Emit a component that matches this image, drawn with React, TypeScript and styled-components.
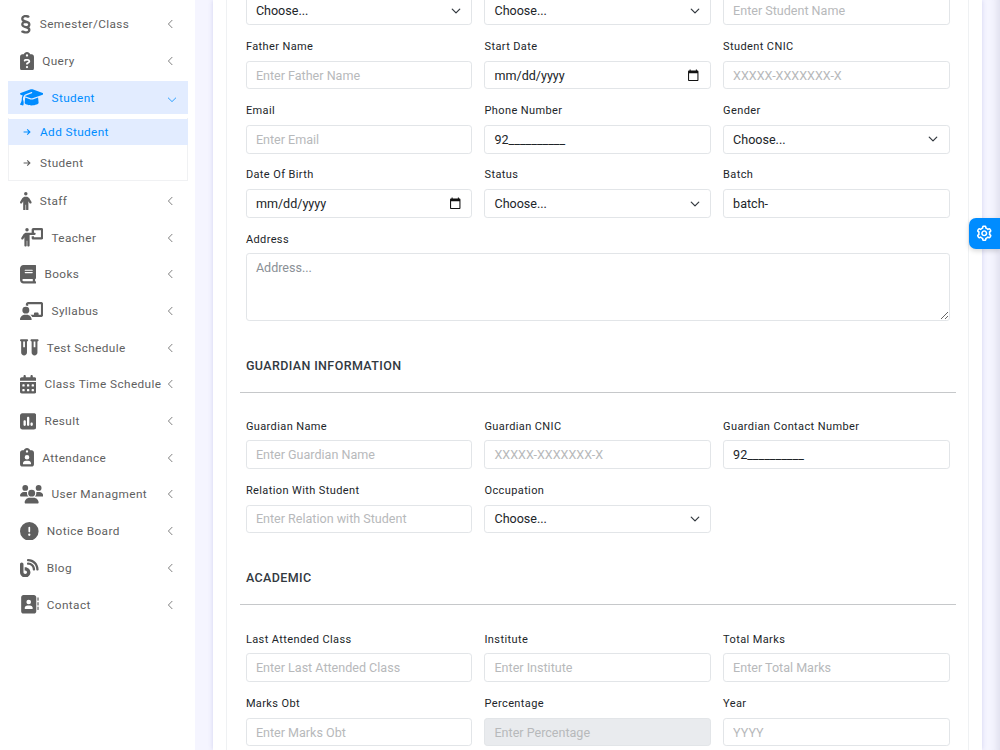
import React from "react";
import styled, { createGlobalStyle, css } from "styled-components";
import type { IconType } from "react-icons";
import {
  FaSection, FaClipboardQuestion, FaGraduationCap, FaPerson, FaPersonChalkboard, FaBook,
  FaChalkboardUser, FaVials, FaCalendarDays, FaSquarePollVertical, FaClipboardUser, FaUsers,
  FaCircleExclamation, FaBlog, FaAddressBook,
} from "react-icons/fa6";
import { BiCog } from "react-icons/bi";

const GlobalStyle = createGlobalStyle`
  *, *::before, *::after { box-sizing: border-box; }
  body {
    margin: 0;
    background: #f5f5ff;
    font-family: Roboto, "Liberation Sans", sans-serif;
    color: #212529;
    overflow: hidden;
  }
  input, select, textarea { font-family: inherit; }
`;

const Page = styled.div`
  display: flex;
  height: 750px;
  overflow: hidden;
`;

const Sidebar = styled.nav`
  flex: 0 0 195.3px;
  min-width: 0;
  padding: 7.6px 7.6px 0 8px;
  background: #fff;
  box-shadow: 0 0 5px rgba(80, 80, 180, 0.16);
`;

const NavLink = styled.a<{ $active?: boolean }>`
  display: flex;
  align-items: center;
  height: 33.3px;
  margin-bottom: 3.42px;
  padding: 0 ${(p) => (p.$active ? "11px" : "13px")} 0 12px;
  font-size: 11.8px;
  letter-spacing: 0.39px;
  color: ${(p) => (p.$active ? "#008cff" : "#5f5f5f")};
  background: ${(p) => (p.$active ? "#e2ecff" : "transparent")};
`;

const IconSlot = styled.span<{ $width: number }>`
  display: flex;
  justify-content: center;
  flex: 0 0 ${(p) => p.$width}px;
  margin-right: 8.2px;

  svg {
    display: block;
    width: ${(p) => p.$width}px;
    height: 18.6px;
  }
`;

const NavText = styled.span`
  flex: 1;
  min-width: 0;
  white-space: nowrap;
`;

const Arrow = styled.svg`
  flex: none;
  width: 10px;
  height: 10px;
  fill: none;
  stroke: currentColor;
  stroke-width: 0.8;
`;

const SubMenu = styled.div`
  margin: 0 0 3.4px;
  padding: 1px 0 3.8px;
  border: 1px solid #f0f1f3;
  border-top: 0;
`;

const SubLink = styled.a<{ $active?: boolean }>`
  display: flex;
  align-items: center;
  gap: 8.5px;
  height: 26.3px;
  margin: 0 -1px 4.7px;
  padding-left: 13.5px;
  font-size: 11.8px;
  letter-spacing: 0.39px;
  color: ${(p) => (p.$active ? "#008cff" : "#5f5f5f")};
  background: ${(p) => (p.$active ? "#e2ecff" : "transparent")};

  &:last-child { margin-bottom: 0; }

  svg {
    width: 10px;
    height: 10px;
    fill: none;
    stroke: currentColor;
    stroke-width: 1.1;
  }
`;

const Main = styled.main`
  flex: 1;
  min-width: 0;
  padding: 0 18.5px 0 18.2px;
  background: #f5f5ff;
  box-shadow: inset -10px 0 8px -8px rgba(60, 60, 90, 0.14);
`;

const Card = styled.div`
  height: 750px;
  padding: 0 12.8px;
  background: #fff;
  box-shadow: 0 0 5px rgba(80, 80, 180, 0.2);
`;

const FormPanel = styled.form`
  display: flow-root;
  height: 750px;
  padding: 0 12px 0 12.6px;
  border: solid #eff1f3;
  border-width: 0 1px;
`;

const Grid = styled.div<{ $scrolled?: boolean }>`
  display: grid;
  grid-template-columns: repeat(3, 1fr);
  column-gap: 12px;
  padding: 0 6px;
  margin-top: ${(p) => (p.$scrolled ? "-3.6px" : "0")};
`;

const Field = styled.label<{ $wide?: boolean }>`
  display: block;
  min-width: 0;
  margin-bottom: 11.75px;
  grid-column: ${(p) => (p.$wide ? "1 / -1" : "auto")};
`;

const Caption = styled.span`
  display: block;
  height: 18px;
  margin-bottom: 5.7px;
  font-size: 11px;
  line-height: 20.2px;
  letter-spacing: 0.39px;
  color: #212529;
`;

const controlText = css`
  font-size: 12.55px;
  line-height: 19px;
  color: #212529;

  &::placeholder {
    color: #b7b9bb;
    opacity: 1;
  }
`;

const Control = styled.span<{ $disabled?: boolean }>`
  display: flex;
  align-items: center;
  height: 28.8px;
  padding: 0 10.4px 0 9px;
  border: 1px solid #e2e5e8;
  border-radius: 3.2px;
  background: ${(p) => (p.$disabled ? "#e9ebee" : "#fff")};
`;

const TextInput = styled.input`
  ${controlText}
  flex: 1;
  min-width: 0;
  height: 100%;
  padding: 0;
  border: 0;
  outline: 0;
  background: transparent;
`;

const SelectInput = styled.select`
  ${controlText}
  flex: 1;
  min-width: 0;
  padding: 0;
  border: 0;
  outline: 0;
  appearance: none;
  background: transparent;
`;

const AddressBox = styled.textarea`
  ${controlText}
  display: block;
  width: 100%;
  height: 67.6px;
  padding: 4px 9px;
  border: 1px solid #e2e5e8;
  border-radius: 3.2px;
  resize: vertical;
  outline: 0;

  &::placeholder { color: #8a9096; }
`;

const SectionHead = styled.div<{ $height: number }>`
  height: ${(p) => p.$height}px;
  padding: 23px 6px 0;
`;

const SectionTitle = styled.h6`
  margin: 0;
  font-size: 12.5px;
  font-weight: 500;
  line-height: 20px;
  letter-spacing: 0.39px;
  text-transform: uppercase;
  color: #32393f;
`;

const Rule = styled.hr`
  height: 1px;
  margin: 16.2px -6px 0;
  border: 0;
  background: #c6c8ca;
`;

const SettingsButton = styled.button`
  position: fixed;
  top: 217.5px;
  right: 0;
  display: flex;
  align-items: center;
  width: 31.5px;
  height: 31.5px;
  padding: 0 0 0 6.5px;
  border: 0;
  border-radius: 7px 0 0 7px;
  background: #008cff;
  color: #fff;
  box-shadow: 0 2px 5px rgba(0, 0, 0, 0.16);
`;

const ChevronLeft = () => (
  <Arrow viewBox="0 0 10 10"><path d="M7.300 1 3.400 5l3.900 4" /></Arrow>
);
const ChevronDown = () => (
  <Arrow viewBox="0 0 10 10"><path d="m1 4.700 4 3.900 4-3.900" /></Arrow>
);
const ArrowRight = () => (
  <svg viewBox="0 0 10 10"><path d="M1.600 5h6.200M5.200 2.300 7.900 5 5.200 7.700" /></svg>
);
const Caret = () => (
  <svg width="10" height="10" viewBox="0 0 16 16" fill="none" stroke="#343a40" strokeWidth="2" strokeLinecap="round" strokeLinejoin="round">
    <path d="m2 5 6 6 6-6" />
  </svg>
);
const Calendar = () => (
  <svg width="12.500" height="12.500" viewBox="0 0 24 24" fill="#111">
    <path d="M20 3h-1V1h-2v2H7V1H5v2H4c-1.100 0-2 .9-2 2v16c0 1.100.9 2 2 2h16c1.100 0 2-.9 2-2V5c0-1.100-.9-2-2-2zm0 18H4V8h16v13z" />
  </svg>
);

type NavEntry = { label: string; icon: IconType; width: number; children?: string[] };

const NAV: NavEntry[] = [
  { label: "Semester/Class", icon: FaSection, width: 11.6 },
  { label: "Query", icon: FaClipboardQuestion, width: 14 },
  { label: "Student", icon: FaGraduationCap, width: 23.3, children: ["Add Student", "Student"] },
  { label: "Staff", icon: FaPerson, width: 11.6 },
  { label: "Teacher", icon: FaPersonChalkboard, width: 23.3 },
  { label: "Books", icon: FaBook, width: 16.3 },
  { label: "Syllabus", icon: FaChalkboardUser, width: 23.3 },
  { label: "Test Schedule", icon: FaVials, width: 18.6 },
  { label: "Class Time Schedule", icon: FaCalendarDays, width: 16.3 },
  { label: "Result", icon: FaSquarePollVertical, width: 16.3 },
  { label: "Attendance", icon: FaClipboardUser, width: 14 },
  { label: "User Managment", icon: FaUsers, width: 23.3 },
  { label: "Notice Board", icon: FaCircleExclamation, width: 18.6 },
  { label: "Blog", icon: FaBlog, width: 18.6 },
  { label: "Contact", icon: FaAddressBook, width: 18.6 },
];

type FieldSpec = {
  label?: string;
  kind?: "text" | "select" | "date";
  placeholder?: string;
  value?: string;
  disabled?: boolean;
};

const STUDENT: FieldSpec[] = [
  { kind: "select" },
  { kind: "select" },
  { placeholder: "Enter Student Name" },
  { label: "Father Name", placeholder: "Enter Father Name" },
  { label: "Start Date", kind: "date" },
  { label: "Student CNIC", placeholder: "XXXXX-XXXXXXX-X" },
  { label: "Email", placeholder: "Enter Email" },
  { label: "Phone Number", value: "92__________" },
  { label: "Gender", kind: "select" },
  { label: "Date Of Birth", kind: "date" },
  { label: "Status", kind: "select" },
  { label: "Batch", value: "batch-" },
];

const GUARDIAN: FieldSpec[] = [
  { label: "Guardian Name", placeholder: "Enter Guardian Name" },
  { label: "Guardian CNIC", placeholder: "XXXXX-XXXXXXX-X" },
  { label: "Guardian Contact Number", value: "92__________" },
  { label: "Relation With Student", placeholder: "Enter Relation with Student" },
  { label: "Occupation", kind: "select" },
];

const ACADEMIC: FieldSpec[] = [
  { label: "Last Attended Class", placeholder: "Enter Last Attended Class" },
  { label: "Institute", placeholder: "Enter Institute" },
  { label: "Total Marks", placeholder: "Enter Total Marks" },
  { label: "Marks Obt", placeholder: "Enter Marks Obt" },
  { label: "Percentage", placeholder: "Enter Percentage", disabled: true },
  { label: "Year", placeholder: "YYYY" },
];

function FormField({ label, kind = "text", placeholder, value, disabled }: FieldSpec) {
  return (
    <Field>
      {label && <Caption>{label}</Caption>}
      <Control $disabled={disabled}>
        {kind === "select" && (
          <>
            <SelectInput><option>Choose...</option></SelectInput>
            <Caret />
          </>
        )}
        {kind === "date" && (
          <>
            <TextInput defaultValue="mm/dd/yyyy" />
            <Calendar />
          </>
        )}
        {kind === "text" && (
          <TextInput placeholder={placeholder} defaultValue={value} disabled={disabled} />
        )}
      </Control>
    </Field>
  );
}

type SectionProps = { title: string; fields: FieldSpec[]; headHeight: number };

function Section({ title, fields, headHeight }: SectionProps) {
  return (
    <>
      <SectionHead $height={headHeight}>
        <SectionTitle>{title}</SectionTitle>
        <Rule />
      </SectionHead>
      <Grid>{fields.map((f, i) => <FormField key={i} {...f} />)}</Grid>
    </>
  );
}

export default function App() {
  return (
    <>
      <GlobalStyle />
      <Page>
        <Sidebar>
          {NAV.map(({ label, icon: Icon, width, children }) => (
            <React.Fragment key={label}>
              <NavLink $active={!!children}>
                <IconSlot $width={width}><Icon /></IconSlot>
                <NavText>{label}</NavText>
                {children ? <ChevronDown /> : <ChevronLeft />}
              </NavLink>
              {children && (
                <SubMenu>
                  {children.map((child, i) => (
                    <SubLink key={child} $active={i === 0}><ArrowRight />{child}</SubLink>
                  ))}
                </SubMenu>
              )}
            </React.Fragment>
          ))}
        </Sidebar>
        <Main>
          <Card>
            <FormPanel>
              <Grid $scrolled>
                {STUDENT.map((f, i) => <FormField key={i} {...f} />)}
                <Field $wide>
                  <Caption>Address</Caption>
                  <AddressBox placeholder="Address..." />
                </Field>
              </Grid>
              <Section title="Guardian Information" fields={GUARDIAN} headHeight={83.9} />
              <Section title="Academic" fields={ACADEMIC} headHeight={84.7} />
            </FormPanel>
          </Card>
        </Main>
        <SettingsButton aria-label="Settings"><BiCog size={18.5} /></SettingsButton>
      </Page>
    </>
  );
}
